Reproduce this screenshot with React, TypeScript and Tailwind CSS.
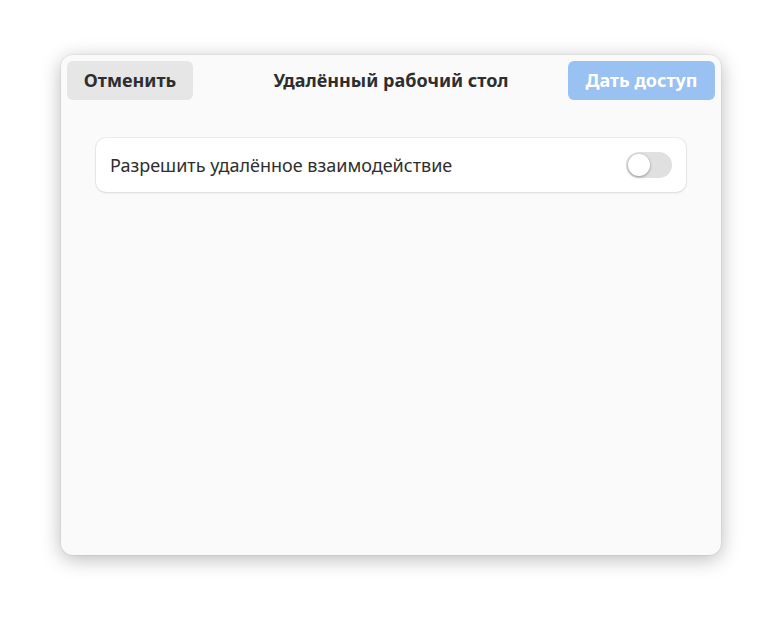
export default function App() {
  return (
    <div className="w-[782px] h-[622px] bg-white relative" style={{ fontFamily: '"Noto Sans", "Open Sans", sans-serif' }}>
      <div className="absolute left-[61px] top-[55px] w-[660px] h-[500px] rounded-[12px] bg-[#fafafa] shadow-[0_4px_20px_rgba(0,0,0,0.28),0_0_0_1px_rgba(0,0,0,0.04)] flex flex-col">
        <div className="relative flex items-center justify-between px-[6px] pt-[6px]">
          <button className="h-[39px] w-[126px] rounded-[6px] bg-[#e6e6e6] text-[#2e2e2e] font-bold text-[18px]">Отменить</button>
          <div className="absolute left-0 right-0 top-[6px] h-[39px] flex items-center justify-center pointer-events-none">
            <span className="font-bold text-[18px] text-[#2e2e2e]">Удалённый рабочий стол</span>
          </div>
          <button className="h-[39px] w-[147px] rounded-[6px] bg-[#99c1f1] text-white font-bold text-[18px]">Дать доступ</button>
        </div>
        <div className="px-[35px] pt-[38px]">
          <div className="h-[54px] rounded-[10px] bg-white shadow-[0_0_0_1px_rgba(0,0,0,0.05),0_1px_3px_rgba(0,0,0,0.08)] flex items-center justify-between pl-[14px] pr-[14px]">
            <span className="text-[18px] text-[#2e2e2e]">Разрешить удалённое взаимодействие</span>
            <div className="w-[46px] h-[26px] rounded-full bg-[#e0e0e0] flex items-center px-[2px]">
              <div className="w-[22px] h-[22px] rounded-full bg-white shadow-[0_1px_3px_rgba(0,0,0,0.35)]" />
            </div>
          </div>
        </div>
      </div>
    </div>
  );
}
